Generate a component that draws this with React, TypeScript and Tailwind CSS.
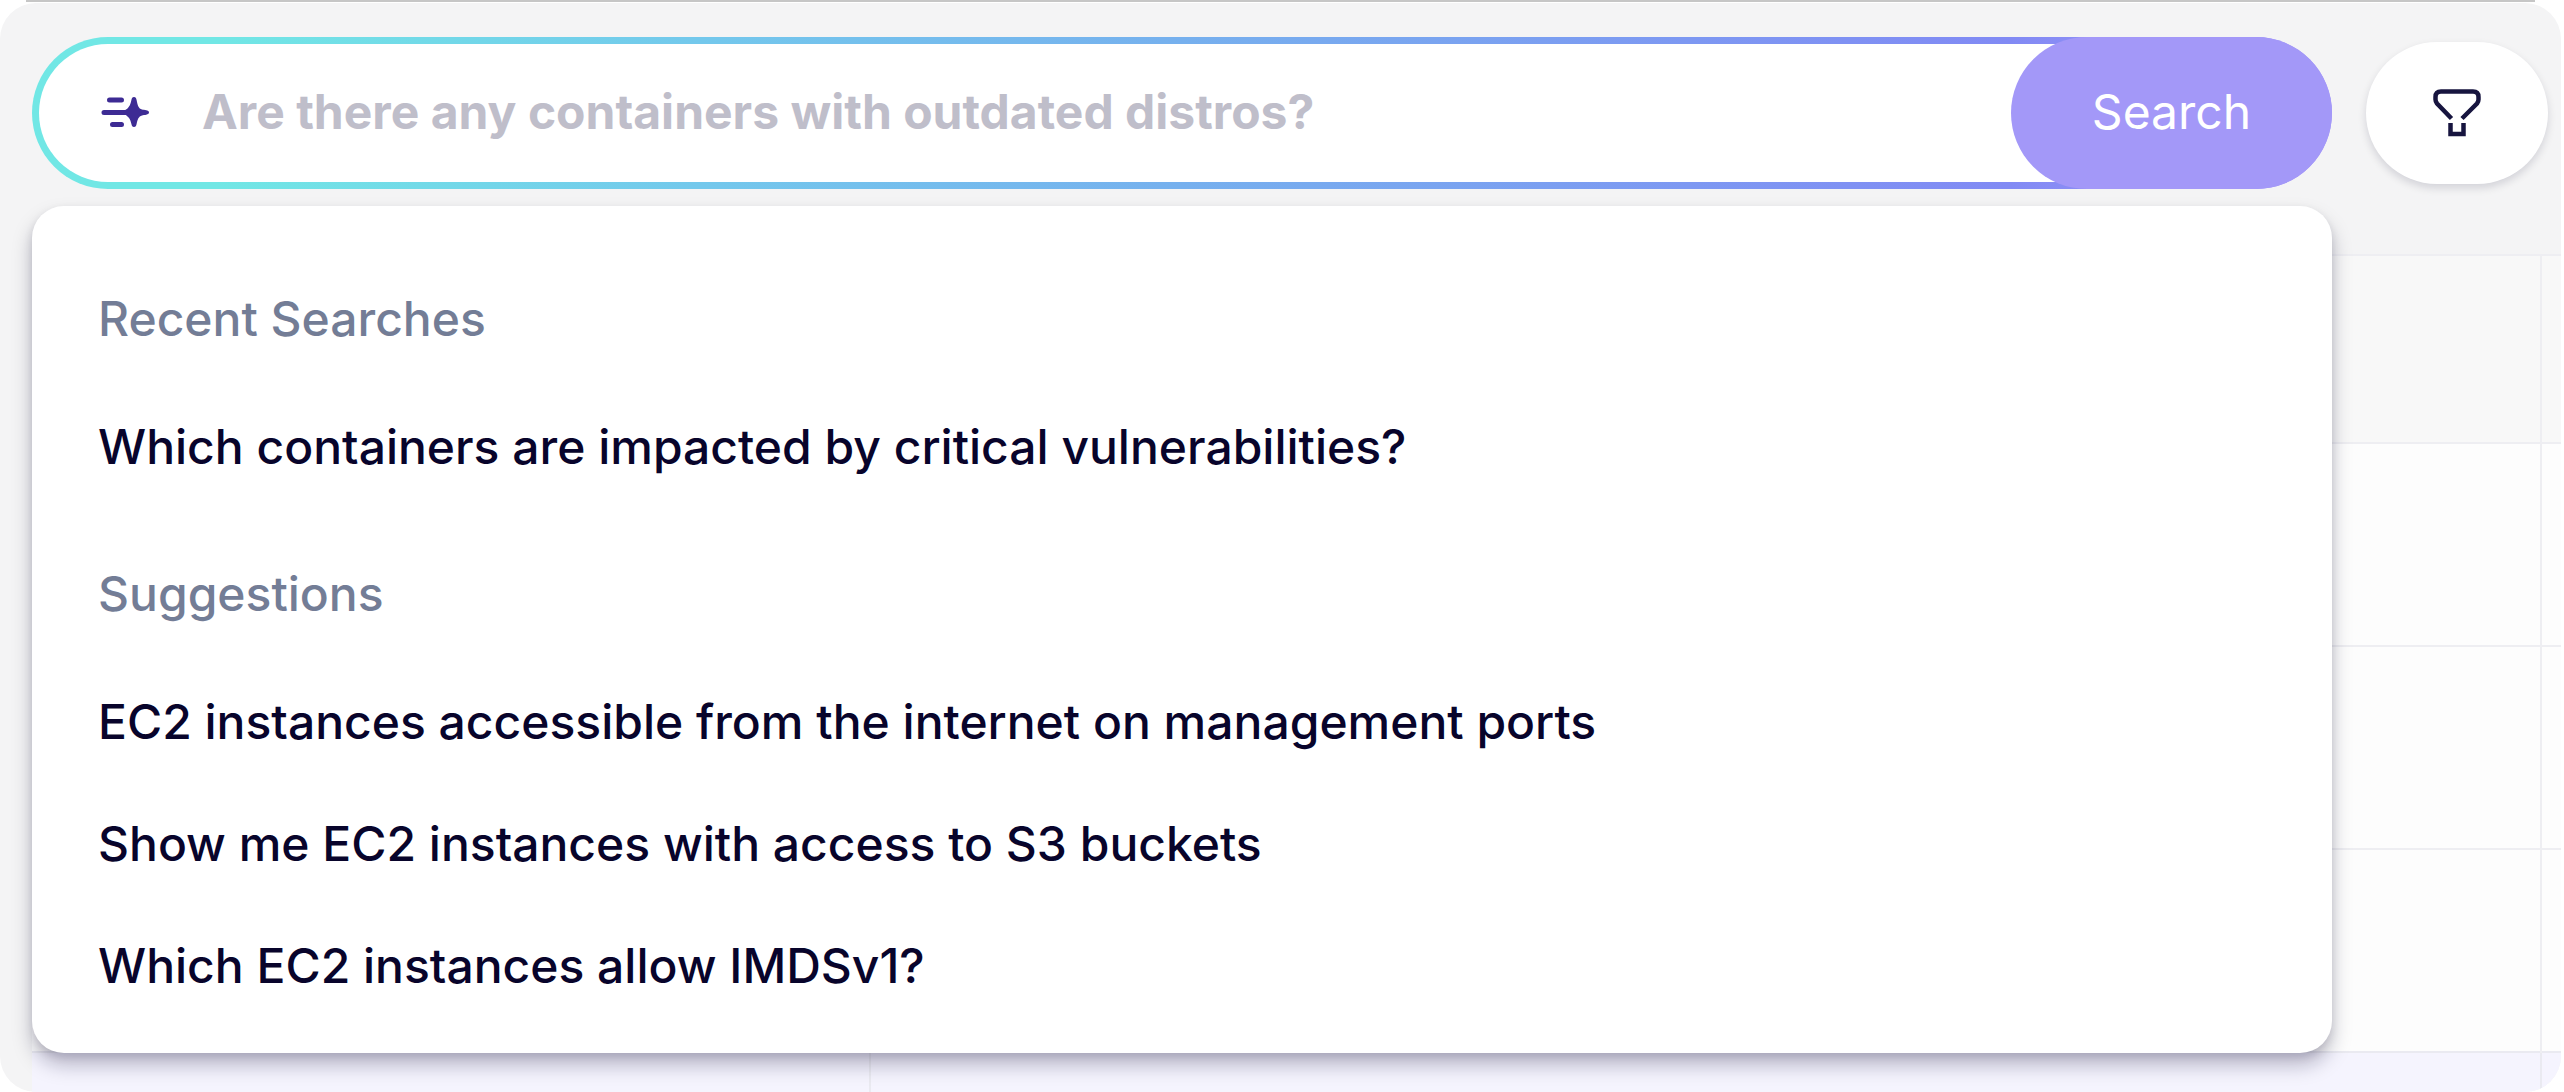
import { useState } from "react";

const recentSearches = ["Which containers are impacted by critical vulnerabilities?"];

const suggestions = [
    "EC2 instances accessible from the internet on management ports",
    "Show me EC2 instances with access to S3 buckets",
    "Which EC2 instances allow IMDSv1?",
];

const SparkleIcon = () => (
    <svg className="h-[30px] w-12 shrink-0" viewBox="0 0 48 30" fill="none" aria-hidden="true">
        <path d="M8.500 3H20.500M3 15.500H26M11.500 27.500H20.500" stroke="#3d2b94" strokeWidth="5" strokeLinecap="round" />
        <path
            d="M33 0C34.600 0 35.200 1 35.600 3C36.700 8.500 37.500 11.500 41 12.600C43 13.200 48 13 48 15.500C48 18 43 17.800 41 18.400C37.500 19.500 36.700 22 35.600 27C35.200 29 34.600 30 33 30C31.400 30 30.800 29 30.400 27C29.300 22 27.500 19 22 16.800V14.200C27.500 12 29.300 8.500 30.400 3C30.800 1 31.400 0 33 0Z"
            fill="#3d2b94"
        />
    </svg>
);

const FilterIcon = () => (
    <svg className="h-12 w-12" viewBox="0 0 48 48" fill="none" stroke="#17153f" strokeWidth="4.500" aria-hidden="true">
        <path d="M18.500 29.500L4 14.500C2.800 13 2.500 12 2.500 10.500V8C2.500 4.500 4.500 2.500 8 2.500H40C43.500 2.500 45.500 4.500 45.500 8V10.500C45.500 12 45.200 13 44 14.500L29 29.500" />
        <path d="M17.500 34V45H30.500V34" />
    </svg>
);

interface SearchGroupProps {
    title: string;
    items: string[];
    onSelect: (value: string) => void;
}

const SearchGroup = ({ title, items, onSelect }: SearchGroupProps) => (
    <section>
        <h2 className="leading-[134px] text-[#737d96]">{title}</h2>
        <ul>
            {items.map((item) => (
                <li key={item}>
                    <button type="button" className="block w-full text-left leading-[122px] text-[#08042b]" onClick={() => onSelect(item)}>
                        {item}
                    </button>
                </li>
            ))}
        </ul>
    </section>
);

const ResultsTable = () => (
    <table className="ml-8 w-[calc(100%-32px)] table-fixed border-collapse">
        <colgroup>
            <col className="w-[838px]" />
            <col />
            <col className="w-5" />
        </colgroup>
        <thead>
            <tr className="h-[188px] border-t-2 border-[#eeeef2] bg-[#f8f8f8]">
                <td className="border-r-2 border-[#eeeef2]" />
                <td className="border-r-2 border-[#eeeef2]" />
                <td />
            </tr>
        </thead>
        <tbody>
            {[1, 2, 3].map((row) => (
                <tr key={row} className="h-[203px] border-t-2 border-[#eeeef2] bg-[#fdfdfd]">
                    <td className="border-r-2 border-[#eeeef2]" />
                    <td className="border-r-2 border-[#eeeef2]" />
                    <td />
                </tr>
            ))}
            <tr className="h-10 border-t-2 border-[#eaeaf1] bg-[#f5f4fe]">
                <td className="border-r-2 border-[#eaeaf1]" />
                <td className="border-r-2 border-[#eaeaf1]" />
                <td />
            </tr>
        </tbody>
    </table>
);

const App = () => {
    const [query, setQuery] = useState("");

    return (
        <div className="flex min-h-screen flex-col bg-white pr-[3px] pb-0.5 font-['Inter',sans-serif] text-[48px] font-medium [font-optical-sizing:none]">
            <div className="mx-[26px] h-0.5 bg-[#c6c6c6]" />
            <div className="mt-px flex-1 overflow-hidden rounded-[36px] bg-[#f4f4f5]">
                <header className="flex items-center gap-[34px] pt-[34px] pr-[13px] pb-[65px] pl-8">
                    <div className="relative flex-1">
                        <form
                            className="flex h-[152px] rounded-full bg-[linear-gradient(90deg,#71e7e5_0%,#71e7e5_8%,#73c8ec_29%,#76b0ee_50%,#7d98f2_72%,#818af4_86%,#a396f8_96%)]"
                            onSubmit={(e) => e.preventDefault()}
                        >
                            <div className="my-[7px] -mr-[76px] ml-[7px] flex flex-1 items-center gap-[53px] rounded-l-full bg-white pr-[100px] pb-0.5 pl-[62px]">
                                <SparkleIcon />
                                <input
                                    type="text"
                                    aria-label="Search"
                                    value={query}
                                    onChange={(e) => setQuery(e.target.value)}
                                    placeholder="Are there any containers with outdated distros?"
                                    className="min-w-0 flex-1 font-bold text-[#08042b] outline-none placeholder:text-[#bfbeca]"
                                />
                            </div>
                            <button type="submit" className="relative w-[321px] rounded-full bg-[#a398f8] pb-0.5 font-normal text-white">
                                Search
                            </button>
                        </form>

                        <div className="absolute inset-x-0 top-[169px] z-10 rounded-[32px] bg-white px-[66px] pt-[46px] pb-[26px] shadow-[0_12px_20px_rgba(8,4,43,0.26),0_4px_8px_rgba(8,4,43,0.1)]">
                            <div className="flex flex-col gap-[19px]">
                                <SearchGroup title="Recent Searches" items={recentSearches} onSelect={setQuery} />
                                <SearchGroup title="Suggestions" items={suggestions} onSelect={setQuery} />
                            </div>
                        </div>
                    </div>

                    <button
                        type="button"
                        aria-label="Filter"
                        className="flex h-[142px] w-[182px] items-center justify-center rounded-full bg-white shadow-[0_4px_8px_rgba(8,4,43,0.14)]"
                    >
                        <FilterIcon />
                    </button>
                </header>

                <ResultsTable />
            </div>
        </div>
    );
};

export default App;
